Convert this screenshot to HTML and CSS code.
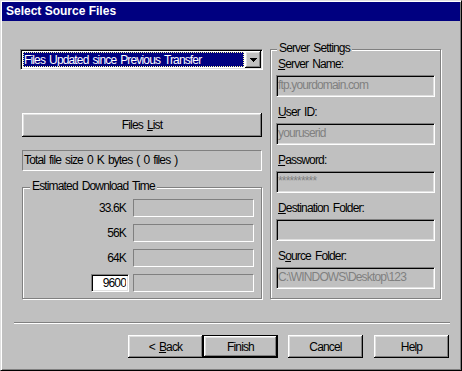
FILE: index.html
```html
<!DOCTYPE html>
<html lang="en">
<head>
  <meta charset="UTF-8">
  <title>Select Source Files</title>
  <link rel="stylesheet" href="styles.css">
</head>
<body>
  <div class="window">
    <div class="titlebar">Select Source Files</div>

    <div class="main">
      <div class="left">
        <div class="combo">
          <div class="combo-value">Files Updated since Previous Transfer</div>
          <div class="combo-arrow">
            <svg width="7" height="4" viewBox="0 0 7 4" shape-rendering="crispEdges">
              <rect x="0" y="0" width="7" height="1" fill="#000"/>
              <rect x="1" y="1" width="5" height="1" fill="#000"/>
              <rect x="2" y="2" width="3" height="1" fill="#000"/>
              <rect x="3" y="3" width="1" height="1" fill="#000"/>
            </svg>
          </div>
        </div>

        <button class="btn btn-wide">Files <u>L</u>ist</button>

        <div class="static total">Total file size 0 K bytes ( 0 files )</div>

        <div class="group est">
          <div class="group-title">Estimated Download Time</div>
          <div class="rates">
            <span class="rate-label">33.6K</span>
            <div class="static rate-box"></div>
            <span class="rate-label">56K</span>
            <div class="static rate-box"></div>
            <span class="rate-label">64K</span>
            <div class="static rate-box"></div>
            <input class="rate-input" type="text" value="9600">
            <div class="static rate-box"></div>
          </div>
        </div>
      </div>

      <div class="group server">
        <div class="group-title">Server Settings</div>
        <div class="field">
          <label><u>S</u>erver Name:</label>
          <input class="field-input" type="text" value="ftp.yourdomain.com" disabled>
        </div>
        <div class="field">
          <label><u>U</u>ser ID:</label>
          <input class="field-input" type="text" value="youruserid" disabled>
        </div>
        <div class="field">
          <label><u>P</u>assword:</label>
          <input class="field-input" type="text" value="**********" disabled>
        </div>
        <div class="field">
          <label><u>D</u>estination Folder:</label>
          <input class="field-input" type="text" value="" disabled>
        </div>
        <div class="field">
          <label>S<u>o</u>urce Folder:</label>
          <input class="field-input" type="text" value="C:\WINDOWS\Desktop\123" disabled>
        </div>
      </div>
    </div>

    <div class="separator"></div>

    <div class="buttons">
      <button class="btn">&lt; <u>B</u>ack</button>
      <button class="btn btn-default">Finish</button>
      <button class="btn btn-cancel">Cancel</button>
      <button class="btn btn-help">Help</button>
    </div>
  </div>
</body>
</html>
```

FILE: styles.css
```css
/* Classic 9x wizard dialog */
body {
  margin: 0;
  background: #c0c0c0;
  font-family: "Liberation Sans", Arial, sans-serif;
  font-size: 12px;
  letter-spacing: -0.85px;
  word-spacing: 1.5px;
  color: #000;
}

.window {
  width: 462px;
  height: 371px;
  box-sizing: border-box;
  padding: 1px;
  background: #c0c0c0;
  border: 1px solid;
  border-color: #dfdfdf #000 #000 #dfdfdf;
  box-shadow: inset 1px 1px #fff, inset -1px -1px #808080;
}

.titlebar {
  height: 19px;
  line-height: 19px;
  padding-left: 4px;
  background: #000080;
  color: #fff;
  font-weight: bold;
  font-size: 12px;
  letter-spacing: 0;
  word-spacing: 0;
}

.main {
  display: flex;
  gap: 7px;
  padding: 28px 0 0 18px;
}

.left {
  width: 243px;
}

/* sunken / raised edges */
.combo,
.field-input,
.rate-input {
  box-sizing: border-box;
  border: 1px solid;
  border-color: #808080 #fff #fff #808080;
  box-shadow: inset 1px 1px #000, inset -1px -1px #dfdfdf;
}

.btn,
.combo-arrow {
  background: #c0c0c0;
  box-shadow: inset -1px -1px #000, inset 1px 1px #fff, inset -2px -2px #808080, inset 2px 2px #dfdfdf;
}

.static {
  box-sizing: border-box;
  border: 1px solid;
  border-color: #808080 #fff #fff #808080;
}

.combo {
  display: flex;
  width: 243px;
  height: 21px;
  padding: 1px 1px 1px 2px;
  background: #fff;
}

.combo-value {
  flex: 1;
  margin: 1px 1px 1px 0;
  border: 1px dotted #ffffa0;
  background: #000080;
  color: #fff;
  line-height: 15px;
  white-space: nowrap;
  overflow: hidden;
}

.combo-arrow {
  display: flex;
  align-items: center;
  justify-content: center;
  width: 16px;
  height: 17px;
}

.btn {
  width: 75px;
  height: 23px;
  box-sizing: border-box;
  margin: 0;
  padding: 0;
  border: none;
  font: inherit;
  letter-spacing: inherit;
  word-spacing: inherit;
  color: #000;
}

.btn-wide {
  display: block;
  width: 240px;
  height: 24px;
  margin: 43px 0 0 2px;
}

.total {
  width: 240px;
  height: 21px;
  margin: 13px 0 0 2px;
  padding-left: 1px;
  line-height: 19px;
}

.group {
  box-sizing: border-box;
  border: 1px solid #808080;
  box-shadow: inset 1px 1px #fff, 1px 1px #fff;
}

.group-title {
  width: fit-content;
  margin: -9px 0 1px 7px;
  padding: 0 2px;
  background: #c0c0c0;
  line-height: 15px;
}

.est {
  width: 240px;
  height: 112px;
  margin: 16px 0 0 2px;
}

.rates {
  display: grid;
  grid-template-columns: 1fr 121px;
  grid-auto-rows: 18px;
  column-gap: 4px;
  row-gap: 7px;
  margin-top: 5px;
  padding-right: 7px;
}

.rate-label {
  padding-right: 3px;
  text-align: right;
  line-height: 18px;
}

.rate-input {
  justify-self: end;
  width: 38px;
  height: 18px;
  margin: 0;
  padding: 0 2px;
  background: #fff;
  font: inherit;
  letter-spacing: inherit;
  text-align: right;
  color: #000;
  outline: none;
}

.server {
  width: 171px;
  height: 250px;
  padding: 0 5px;
}

.server .group-title {
  margin-left: 1px;
}

.field + .field {
  margin-top: 8px;
}

.field label {
  display: block;
  padding-left: 2px;
  margin-bottom: 3px;
  line-height: 15px;
}

.field-input {
  display: block;
  width: 159px;
  height: 22px;
  margin: 0;
  padding: 0 1px 2px;
  background: #c0c0c0;
  font: inherit;
  letter-spacing: inherit;
  word-spacing: inherit;
  color: #808080;
  -webkit-text-fill-color: #808080;
}

.separator {
  margin: 23px 10px 0 12px;
  height: 1px;
  border-bottom: 1px solid #fff;
  background: #808080;
}

.buttons {
  display: flex;
  justify-content: flex-end;
  margin-top: 11px;
  padding-right: 11px;
}

.btn-default {
  border: 1px solid #000;
}

.btn-cancel {
  margin-left: 10px;
}

.btn-help {
  margin-left: 11px;
}
```
